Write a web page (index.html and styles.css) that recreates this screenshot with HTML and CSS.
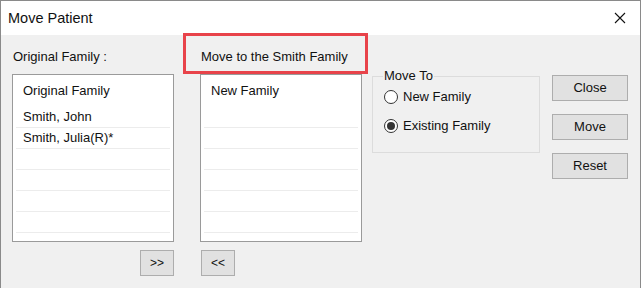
FILE: index.html
```html
<!DOCTYPE html>
<html lang="en">

<head>
    <meta charset="UTF-8">
    <title>Move Patient</title>
    <link rel="stylesheet" href="styles.css">
</head>

<body>
    <div id="dialog">
        <div id="title-bar">
            <span class="title">Move Patient</span>
            <span class="close-x">
                <svg width="12" height="12" viewBox="0 0 12 12"><path d="M1 1L11 11M11 1L1 11" stroke="#111" stroke-width="1.1" fill="none"/></svg>
            </span>
        </div>
        <div id="content">
            <div class="column">
                <div class="col-label">Original Family :</div>
                <ul class="list-box">
                    <li class="list-head">Original Family</li>
                    <li>Smith, John</li>
                    <li>Smith, Julia(R)*</li>
                    <li></li>
                    <li></li>
                    <li></li>
                    <li></li>
                </ul>
                <div class="arrow-row right"><button class="btn arrow">&gt;&gt;</button></div>
            </div>
            <div class="column">
                <div class="col-label highlight">Move to the Smith Family<span class="mark"></span></div>
                <ul class="list-box">
                    <li class="list-head">New Family</li>
                    <li></li>
                    <li></li>
                    <li></li>
                    <li></li>
                    <li></li>
                    <li></li>
                </ul>
                <div class="arrow-row"><button class="btn arrow">&lt;&lt;</button></div>
            </div>
            <fieldset class="group">
                <legend>Move To</legend>
                <label class="radio"><span class="dot"></span>New Family</label>
                <label class="radio"><span class="dot on"></span>Existing Family</label>
            </fieldset>
            <div class="actions">
                <button class="btn">Close</button>
                <button class="btn">Move</button>
                <button class="btn">Reset</button>
            </div>
        </div>
    </div>
</body>

</html>
```

FILE: styles.css
```css
body {
    margin: 0;
    font: 13px/18px "Liberation Sans", Arial, sans-serif;
    color: #111;
}

#dialog {
    width: 641px;
    height: 288px;
    box-sizing: border-box;
    border: 1px solid #8a8a8a;
    border-bottom: 0;
    background-color: #f0f0f0;
}

#title-bar {
    height: 34px;
    background-color: #fff;
    display: flex;
    align-items: center;
    justify-content: space-between;
    padding: 0 14px 0 7px;
}
#title-bar .title {
    font-size: 14.5px;
}
#title-bar .close-x {
    display: flex;
}

#content {
    display: flex;
    align-items: flex-start;
    padding: 13px 0 0 11px;
}

.column {
    width: 162px;
    margin-right: 26px;
}
.column + .column {
    margin-right: 10px;
}

.col-label {
    height: 18px;
    margin-bottom: 8px;
    padding-left: 1px;
    position: relative;
}
.col-label .mark {
    position: absolute;
    top: -15px;
    bottom: -8px;
    left: -17px;
    right: -6px;
    border: 3px solid #e8434a;
}

.list-box {
    list-style: none;
    margin: 0;
    padding: 0 3px;
    height: 168px;
    box-sizing: border-box;
    border: 1px solid #9a9a9a;
    background-color: #fff;
    overflow: hidden;
}
.list-box li {
    height: 20px;
    line-height: 20px;
    padding-left: 7px;
    border-bottom: 1px solid #ececec;
}
.list-box .list-head {
    height: 32px;
    line-height: 32px;
    border-bottom: 0;
}

.arrow-row {
    display: flex;
    margin-top: 8px;
}
.arrow-row.right {
    justify-content: flex-end;
}

.btn {
    font: inherit;
    color: #111;
    background-color: #e1e1e1;
    border: 1px solid #adadad;
    padding: 0;
    height: 26px;
    width: 76px;
}
.btn.arrow {
    width: 34px;
    font-size: 12px;
}
.arrow-row:not(.right) .btn {
    margin-left: 1px;
}

.group {
    margin: 21px 12px 0 0;
    padding: 4px 0 0 11px;
    width: 168px;
    height: 84px;
    box-sizing: border-box;
    border: 1px solid #dcdcdc;
}
.group legend {
    padding: 0 1px;
    margin-left: -1px;
    line-height: 14px;
}
.radio {
    display: flex;
    align-items: center;
    height: 20px;
    margin-bottom: 9px;
}
.radio .dot {
    width: 12px;
    height: 12px;
    border: 1px solid #333;
    border-radius: 50%;
    background-color: #fff;
    margin-right: 5px;
    position: relative;
}
.radio .dot.on:after {
    content: "";
    position: absolute;
    width: 8px;
    height: 8px;
    left: 2px;
    top: 2px;
    border-radius: 50%;
    background-color: #333;
}

.actions {
    display: flex;
    flex-direction: column;
    gap: 13px;
    margin-top: 27px;
}
.actions .btn {
    height: 26px;
}
```
